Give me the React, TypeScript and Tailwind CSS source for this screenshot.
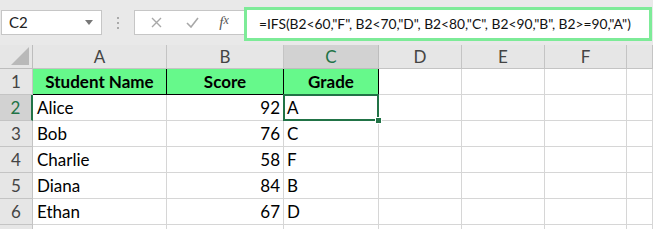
import React from "react";

const cols = ["A", "B", "C", "D", "E", "F", ""];
const rows = [
  { name: "Alice", score: 92, grade: "A" },
  { name: "Bob", score: 76, grade: "C" },
  { name: "Charlie", score: 58, grade: "F" },
  { name: "Diana", score: 84, grade: "B" },
  { name: "Ethan", score: 67, grade: "D" },
];

const grid = "grid grid-cols-[33px_134px_117px_95px_83px_83px_82px_1fr]";
const cell = "h-[26px] border-r border-b border-[#d6d6d6] flex items-center px-[3px] text-[17px] text-black overflow-hidden whitespace-nowrap";
const rowHead = "h-[26px] border-r border-b border-[#c4c4c4] bg-[#e6e6e6] flex items-center justify-center text-[17px] text-[#444]";

export default function App() {
  return (
    <div className="w-[653px] h-[229px] overflow-hidden bg-white font-['Lato',sans-serif]">
      {/* formula bar */}
      <div className="h-[45px] bg-[#e9e9e9] flex items-start pt-[7px] pl-px">
        <div className="mt-[3px] w-[101px] h-[25px] bg-white border border-[#c6c6c6] flex items-center pl-[7px] pr-[8px] text-[15px] text-[#222]">
          <span className="flex-1">C2</span>
          <svg width="8" height="5" viewBox="0 0 8 5"><path d="M0 0h8L4 5z" fill="#777" /></svg>
        </div>
        <div className="w-[32px] mt-[3px] h-[25px] flex flex-col items-center justify-center gap-[3px]">
          <span className="w-[2px] h-[2px] bg-[#aaa]" />
          <span className="w-[2px] h-[2px] bg-[#aaa]" />
          <span className="w-[2px] h-[2px] bg-[#aaa]" />
        </div>
        <div className="mt-[3px] w-[110px] h-[25px] bg-white border border-[#c6c6c6] border-r-0 flex items-center">
          <div className="w-[37px] flex justify-center pl-[6px]">
            <svg width="11" height="11" viewBox="0 0 11 11"><path d="M1 1l9 9M10 1l-9 9" stroke="#a8a8a8" strokeWidth="1.4" /></svg>
          </div>
          <div className="w-[36px] flex justify-center pl-[4px]">
            <svg width="13" height="11" viewBox="0 0 13 11"><path d="M1 6l4 4 7-9" stroke="#a8a8a8" strokeWidth="1.6" fill="none" /></svg>
          </div>
          <div className="flex-1 flex justify-center pr-[4px] font-['Liberation_Serif',serif] italic text-[15px] text-[#555]">
            f<span className="text-[12px]">x</span>
          </div>
        </div>
        <div className="w-[408px] h-[34px] border-[3px] border-[#7deb98] bg-white flex items-center pl-[12px] text-[13.8px] text-[#111] whitespace-nowrap">
          =IFS(B2&lt;60,"F", B2&lt;70,"D", B2&lt;80,"C", B2&lt;90,"B", B2&gt;=90,"A")
        </div>
      </div>

      {/* header row */}
      <div className={grid}>
        <div className="h-[24px] border-r border-b border-[#bdbdbd] bg-[#e6e6e6] flex items-end justify-end pr-[3px] pb-[3px]">
          <svg width="18" height="18" viewBox="0 0 18 18"><path d="M18 0v18H0z" fill="#b9b9b9" /></svg>
        </div>
        {cols.map((c) => (
          <div
            key={c || "g"}
            className={
              c === "C"
                ? "h-[24px] border-r border-b border-[#bdbdbd] bg-[#d2d2d2] flex items-center justify-center text-[17px] text-[#217346]"
                : "h-[24px] border-r border-b border-[#c4c4c4] bg-[#e6e6e6] flex items-center justify-center text-[17px] text-[#444]"
            }
          >
            {c}
          </div>
        ))}
      </div>

      {/* row 1 */}
      <div className={grid}>
        <div className={rowHead}>1</div>
        <div className={cell + " bg-[#66f98b] justify-center font-bold border-r-black border-b-black"}>Student Name</div>
        <div className={cell + " bg-[#66f98b] justify-center font-bold border-r-black border-b-black"}>Score</div>
        <div className={cell + " bg-[#66f98b] justify-center font-bold border-r-black border-b-[#217346]"}>Grade</div>
        <div className={cell} />
        <div className={cell} />
        <div className={cell} />
        <div className={cell} />
      </div>

      {rows.map((r, i) => (
        <div key={r.name} className={grid + (i === 0 ? " relative z-10" : "")}>
          {i === 0 ? (
            <div className="h-[26px] border-r-2 border-b border-r-[#217346] border-b-[#c4c4c4] bg-[#d2d2d2] flex items-center justify-center text-[17px] text-[#217346]">2</div>
          ) : (
            <div className={rowHead}>{i + 2}</div>
          )}
          <div className={cell + " pl-[4px]"}>{r.name}</div>
          <div className={cell + " justify-end pr-[3px]"}>{r.score}</div>
          <div className={cell + (i === 0 ? " relative z-10 overflow-visible" : "")}>
            {r.grade}
            {i === 0 && (
              <>
                <div className="absolute -left-px -top-px -right-px -bottom-px border-2 border-[#217346]" />
                <div className="absolute -right-[4px] -bottom-[4px] w-[7px] h-[7px] bg-[#217346] border border-white" />
              </>
            )}
          </div>
          <div className={cell} />
          <div className={cell} />
          <div className={cell} />
          <div className={cell} />
        </div>
      ))}

      <div className={grid}>
        <div className={rowHead} />
        <div className={cell} />
        <div className={cell} />
        <div className={cell} />
        <div className={cell} />
        <div className={cell} />
        <div className={cell} />
        <div className={cell} />
      </div>
    </div>
  );
}
